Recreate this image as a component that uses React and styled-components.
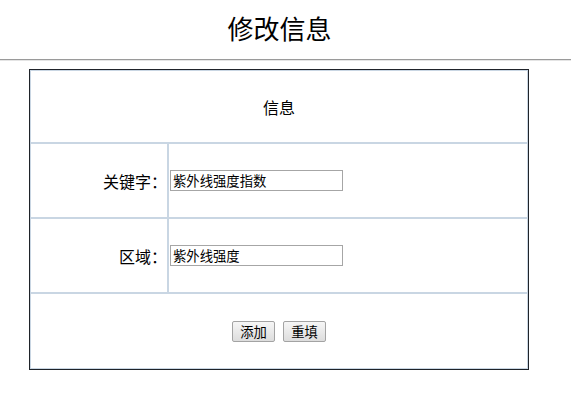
import React from "react";
import styled, { createGlobalStyle } from "styled-components";

const GlobalStyle = createGlobalStyle`
    body {
        margin: 0;
        background: #ffffff;
        font-family: "Noto Sans CJK SC", "Liberation Sans", sans-serif;
        color: #000;
    }
`

const rows = [
    { label: "关键字：", value: "紫外线强度指数", h: 73 },
    { label: "区域：", value: "紫外线强度", h: 73 },
];

const App = () => {
    return (
        <>
            <GlobalStyle />
            <Title>修改信息</Title>
            <Rule />
            <FormTable>
                <tbody>
                    <tr>
                        <Cell colSpan={2} $h={71} $align="center">信息</Cell>
                    </tr>
                    {rows.map((row) => (
                        <tr key={row.label}>
                            <LabelCell $h={row.h}>{row.label}</LabelCell>
                            <Cell $h={row.h}>
                                <TextInput type="text" defaultValue={row.value} />
                            </Cell>
                        </tr>
                    ))}
                    <tr>
                        <Cell colSpan={2} $h={74} $align="center">
                            <Buttons>
                                <Button type="button">添加</Button>
                                <Button type="reset">重填</Button>
                            </Buttons>
                        </Cell>
                    </tr>
                </tbody>
            </FormTable>
        </>
    );
}

export default App;

const Title = styled.h2`
    margin: 0;
    height: 54px;
    display: flex;
    align-items: center;
    justify-content: center;
    font-size: 26px;
    font-weight: 400;
    padding-right: 12px;
    box-sizing: border-box;
`
const Rule = styled.hr`
    margin: 5px 0 8px 0;
    height: 0;
    border: none;
    border-top: 1px solid #9a9a9a;
    border-bottom: 1px solid #e4e4e4;
`
const FormTable = styled.table`
    margin-left: 29px;
    width: 500px;
    border: 1px solid #1f2329;
    border-collapse: separate;
    border-spacing: 0;
    font-size: 16px;
`
const Cell = styled.td`
    height: ${(p) => p.$h}px;
    padding: 0 1px;
    border: 1px solid #c9d6e3;
    text-align: ${(p) => p.$align || "left"};
    vertical-align: middle;
`
const LabelCell = styled(Cell)`
    width: 135px;
    text-align: right;
    padding-right: 0;
`
const TextInput = styled.input`
    display: block;
    margin-left: 0;
    width: 173px;
    height: 21px;
    box-sizing: border-box;
    padding: 1px 2px;
    border: 1px solid #a6a6a6;
    font-family: "Noto Sans CJK SC", sans-serif;
    font-size: 13.33px;
    color: #000;
    outline: none;
`
const Buttons = styled.div`
    display: flex;
    justify-content: center;
    gap: 8px;
`
const Button = styled.button`
    height: 21px;
    width: 43px;
    padding: 0;
    border: 1px solid #a3a3a3;
    border-radius: 2px;
    background: linear-gradient(#f6f6f6, #dddddd);
    font-family: "Noto Sans CJK SC", sans-serif;
    font-size: 13.33px;
    color: #000;
    line-height: 19px;
`
